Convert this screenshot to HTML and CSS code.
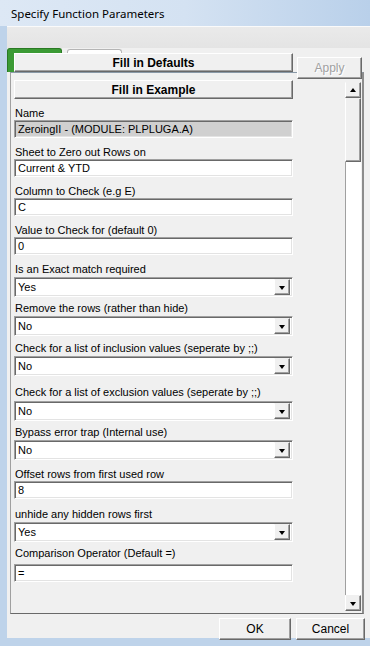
FILE: index.html
```html
<!DOCTYPE html>
<html lang="en">
<head>
  <meta charset="UTF-8">
  <title>Specify Function Parameters</title>
  <link rel="stylesheet" href="styles.css">
</head>
<body>

<div class="window">
  <div class="titlebar">Specify Function Parameters</div>

  <div class="frame">
    <div class="client">
      <div class="topband"></div>

      <div class="tabs">
        <div class="tab tab-green"></div>
        <div class="tab tab-white"></div>
      </div>

      <!-- these two sit over the tab strip -->
      <button class="btn btn-wide btn-defaults">Fill in Defaults</button>
      <button class="btn btn-apply" disabled>Apply</button>

      <div class="page">
        <div class="scroller">
          <div class="content">
            <button class="btn btn-wide">Fill in Example</button>

            <div class="fields">
              <div class="row">
                <label>Name</label>
                <div class="field readonly">ZeroingII - (MODULE: PLPLUGA.A)</div>
              </div>
              <div class="row">
                <label>Sheet to Zero out Rows on</label>
                <div class="field">Current &amp; YTD</div>
              </div>
              <div class="row">
                <label>Column to Check (e.g E)</label>
                <div class="field">C</div>
              </div>
              <div class="row">
                <label>Value to Check for (default 0)</label>
                <div class="field">0</div>
              </div>
              <div class="row">
                <label>Is an Exact match required</label>
                <div class="combo"><span>Yes</span><i class="drop"></i></div>
              </div>
              <div class="row tall">
                <label>Remove the rows (rather than hide)</label>
                <div class="combo"><span>No</span><i class="drop"></i></div>
              </div>
              <div class="row taller">
                <label>Check for a list of inclusion values (seperate by ;;)</label>
                <div class="combo"><span>No</span><i class="drop"></i></div>
              </div>
              <div class="row tall">
                <label>Check for a list of exclusion values (seperate by ;;)</label>
                <div class="combo low"><span>No</span><i class="drop"></i></div>
              </div>
              <div class="row tall extra">
                <label>Bypass error trap (Internal use)</label>
                <div class="combo"><span>No</span><i class="drop"></i></div>
              </div>
              <div class="row tall">
                <label>Offset rows from first used row</label>
                <div class="field">8</div>
              </div>
              <div class="row">
                <label>unhide any hidden rows first</label>
                <div class="combo"><span>Yes</span><i class="drop"></i></div>
              </div>
              <div class="row">
                <label>Comparison Operator (Default =)</label>
                <div class="field low">=</div>
              </div>
            </div>
          </div>

          <div class="scrollbar">
            <div class="sb-btn"><i class="arrow-up"></i></div>
            <div class="sb-thumb"></div>
            <div class="sb-track"></div>
            <div class="sb-btn"><i class="arrow-down"></i></div>
          </div>
        </div>
      </div>

      <div class="footer">
        <button class="btn btn-foot">OK</button>
        <button class="btn btn-foot">Cancel</button>
      </div>
    </div>
  </div>
</div>

</body>
</html>
```

FILE: styles.css
```css
body {
  margin: 0;
  width: 370px;
  height: 646px;
  overflow: hidden;
  font-family: 'Liberation Sans', Arial, sans-serif;
  font-size: 11px;
  color: #000;
}
.window {
  width: 370px;
  height: 646px;
  background: #bed3ea;
  position: relative;
}
.titlebar {
  height: 26px;
  line-height: 27px;
  padding-left: 11px;
  font-family: 'Noto Sans', 'Open Sans', sans-serif;
  font-size: 11.5px;
  background: linear-gradient(90deg, #dde8f5 0%, #d4e2f2 50%, #b9d0ea 100%);
}
.frame {
  height: 612px;
  padding-left: 7px;
}
.client {
  width: 363px;
  height: 612px;
  background: #f0f0f0;
  position: relative;
}
.topband {
  height: 22px;
  background: linear-gradient(#eaeaea, #e4e4e4);
  border-top: 1px solid #fafafa;
  box-sizing: border-box;
}
.tabs {
  height: 24px;
  display: flex;
  gap: 5px;
  align-items: flex-end;
  position: relative;
}
.tab {
  width: 55px;
  height: 24px;
  border-radius: 3px 3px 0 0;
  box-sizing: border-box;
}
.tab-green {
  background: #3b9a34;
  border: 1px solid #2a7a24;
  border-bottom: none;
}
.tab-white {
  background: #fff;
  border: 1px solid #b5b5b5;
  border-bottom: none;
  height: 21px;
  align-self: flex-start;
  margin-top: 1px;
}

/* classic raised button */
.btn {
  font-family: 'Liberation Sans', Arial, sans-serif;
  font-size: 12px;
  background: #f0f0f0;
  border: 1px solid;
  border-color: #fff #696969 #696969 #fff;
  box-shadow: inset -1px -1px #a0a0a0;
  padding: 0;
  margin: 0;
  color: #000;
  display: block;
  box-sizing: border-box;
}
.btn-wide {
  width: 279px;
  height: 19px;
  font-weight: bold;
  line-height: 16px;
}
.btn-defaults {
  position: absolute;
  left: 7px;
  top: 27px;
}
.btn-apply {
  position: absolute;
  left: 290px;
  top: 31px;
  width: 65px;
  height: 22px;
  color: #a0a0a0;
  text-shadow: 1px 1px #fff;
}

.page {
  height: 542px;
  margin-left: 3px;
  width: 354px;
  box-sizing: border-box;
  border-top: 1px solid #8a9aa8;
  border-left: 1px solid #a0a0a0;
  border-bottom: 1px solid #696969;
  border-right: 2px solid #8c8c8c;
}
.scroller {
  display: flex;
  height: 540px;
  padding-top: 7px;
  box-sizing: border-box;
}
.content {
  flex: 1;
  padding-left: 3px;
}
.fields {
  margin-top: 8px;
}
.row {
  height: 39px;
}
.row.tall {
  height: 40px;
}
.row.taller {
  height: 44px;
}
.row.extra {
  height: 42px;
}
.row label {
  display: block;
  height: 13px;
  line-height: 13px;
  padding-left: 1px;
  white-space: nowrap;
}
.field, .combo {
  width: 279px;
  box-sizing: border-box;
  background: #fff;
  border: 1px solid;
  border-color: #a0a0a0 #fff #fff #a0a0a0;
  box-shadow: inset 1px 1px #696969, inset -1px -1px #e3e3e3;
  padding-left: 3px;
  white-space: nowrap;
  overflow: hidden;
}
.field {
  height: 18px;
  line-height: 16px;
}
.field.readonly {
  background: #d0d0d0;
}
.combo {
  height: 20px;
  line-height: 18px;
  margin-top: 1px;
  display: flex;
  justify-content: space-between;
  padding-right: 2px;
}
.combo.low {
  margin-top: 2px;
}
.field.low {
  margin-top: 4px;
}
.drop {
  width: 16px;
  height: 16px;
  margin-top: 1px;
  box-sizing: border-box;
  background: #f0f0f0;
  border: 1px solid;
  border-color: #f0f0f0 #696969 #696969 #fff;
  box-shadow: inset -1px -1px #a0a0a0;
  position: relative;
}
.drop::after, .arrow-down::after {
  content: '';
  position: absolute;
  left: 4px;
  top: 6px;
  border-left: 3px solid transparent;
  border-right: 3px solid transparent;
  border-top: 4px solid #000;
}

.scrollbar {
  width: 16px;
  margin-right: 1px;
  margin-top: 2px;
  display: flex;
  flex-direction: column;
  height: 529px;
}
.sb-btn {
  height: 16px;
  box-sizing: border-box;
  background: #f0f0f0;
  border: 1px solid;
  border-color: #f0f0f0 #696969 #696969 #fff;
  box-shadow: inset -1px -1px #a0a0a0;
  position: relative;
}
.sb-btn i {
  display: block;
}
.arrow-up::after {
  content: '';
  position: absolute;
  left: 4px;
  top: 5px;
  border-left: 3px solid transparent;
  border-right: 3px solid transparent;
  border-bottom: 4px solid #000;
}
.sb-thumb {
  height: 64px;
  box-sizing: border-box;
  background: #f0f0f0;
  border: 1px solid;
  border-color: #f0f0f0 #696969 #696969 #fff;
  box-shadow: inset -1px -1px #a0a0a0;
}
.sb-track {
  flex: 1;
  background: #fff;
  border-left: 1px solid #a0a0a0;
}

.footer {
  display: flex;
  justify-content: flex-end;
  gap: 5px;
  padding: 4px 5px 0 0;
}
.btn-foot {
  width: 72px;
  height: 22px;
  font-size: 12px;
}
.btn-foot:last-child {
  width: 69px;
}
```
